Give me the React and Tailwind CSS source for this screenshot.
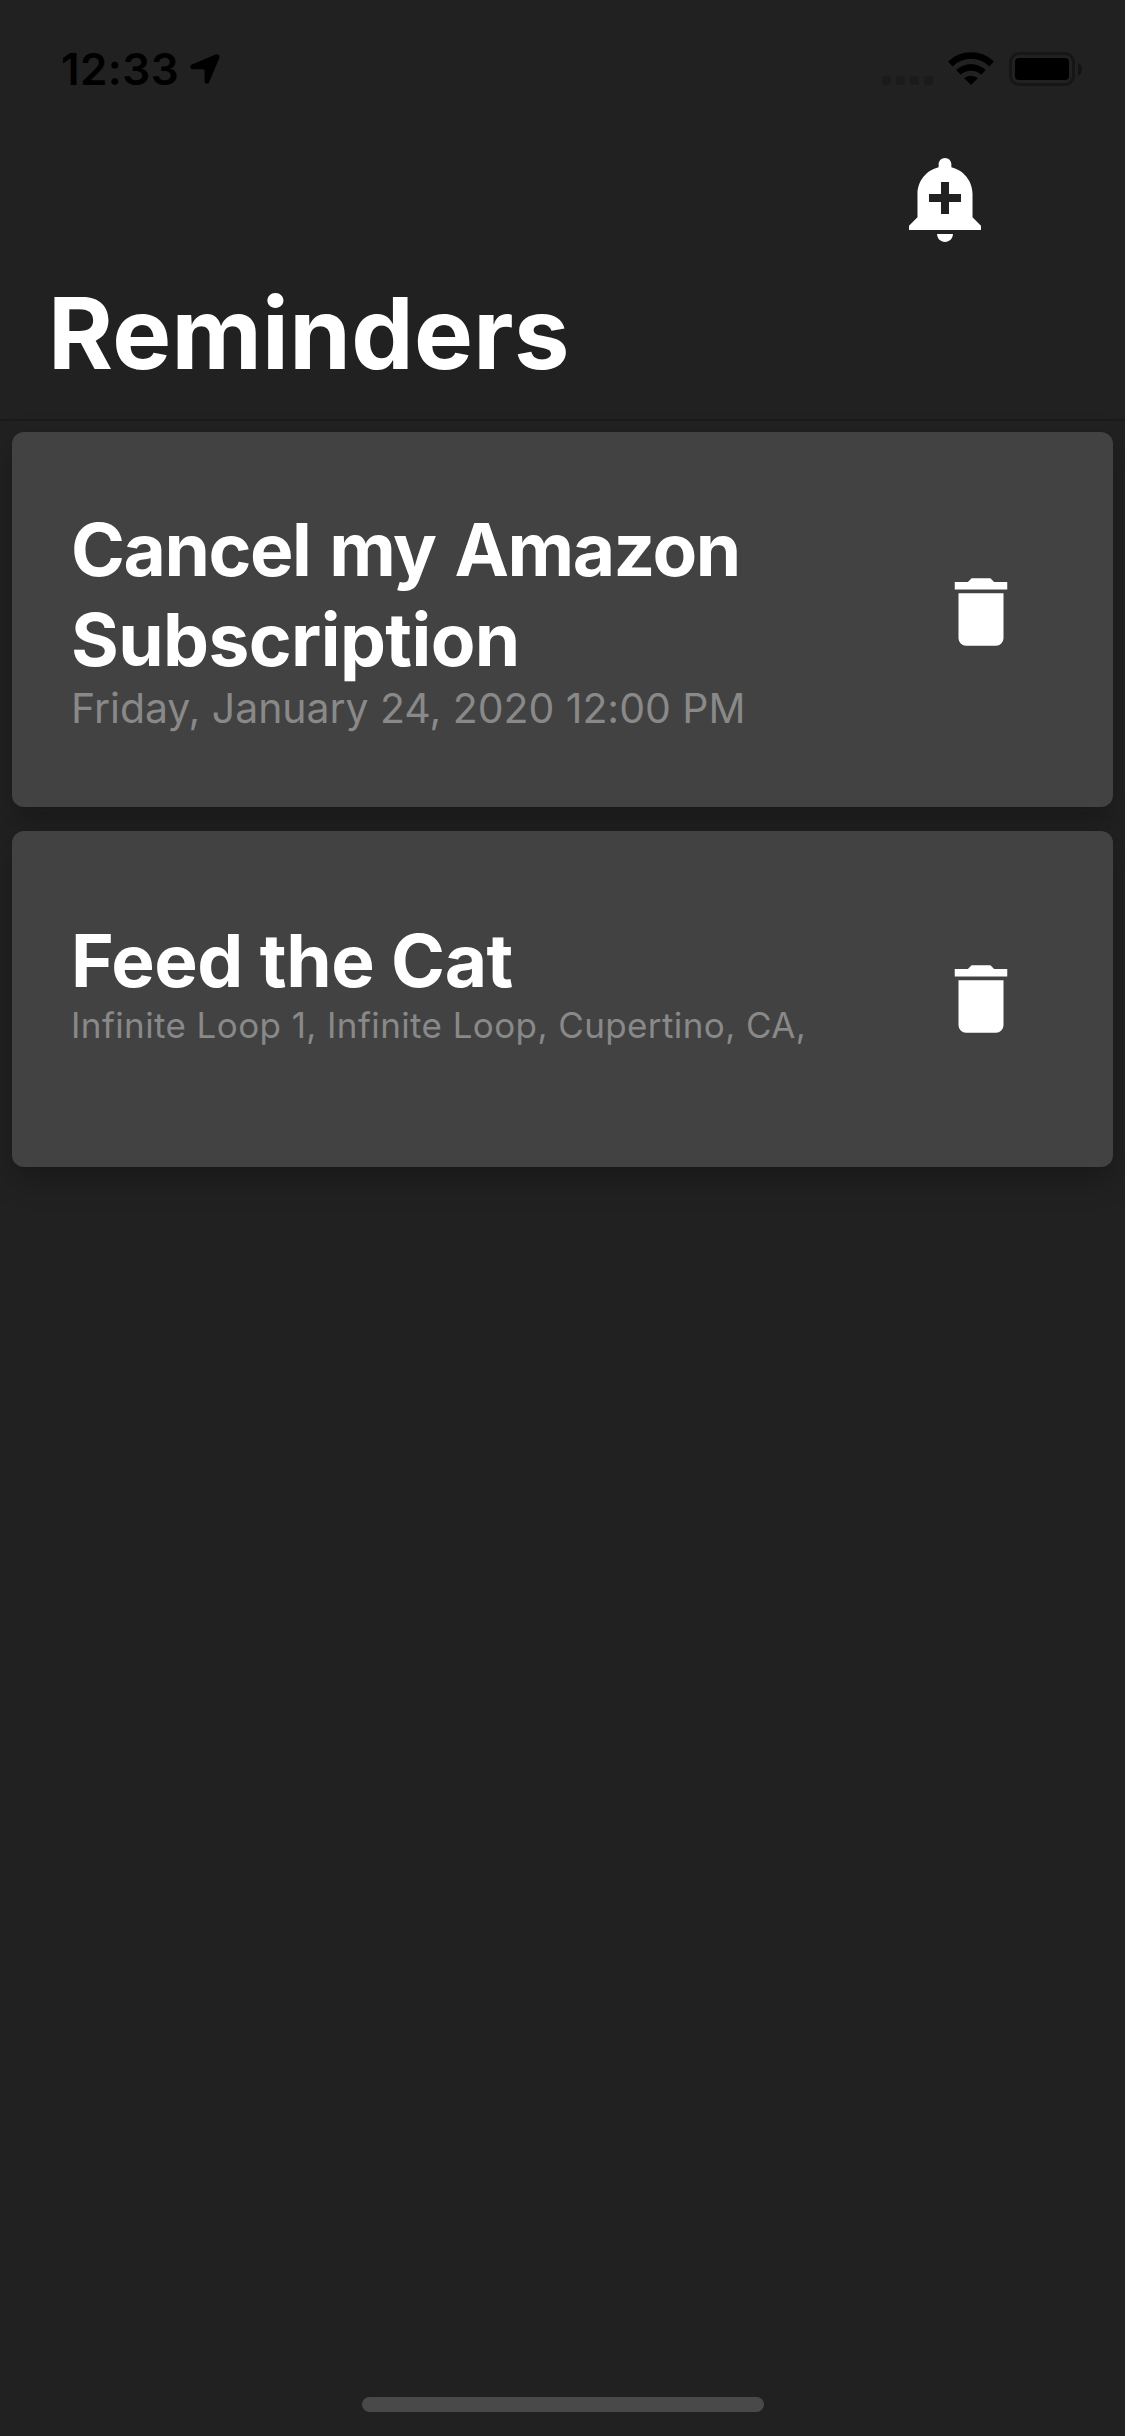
function LocationArrow() {
  return (
    <svg className="mt-[54px] ml-[11px] h-[30px] w-[30px]" viewBox="0 0 30 30">
      <path
        d="M25.6 .5 2 10.6C-.6 11.8-.1 15.2 2.600 15.2H12.700Q14.600 15.200 14.600 17V27.400C14.600 30 18 30.600 19.200 28L29.200 4.300C30.200 1.600 28.200-.5 25.600 .5Z"
        fill="black"
      />
    </svg>
  );
}

function SignalDots() {
  return (
    <div className="mt-[76px] flex gap-[5px]">
      {[0, 1, 2, 3].map((i) => (
        <span key={i} className="size-[9px] rounded-[3px] bg-[#1b1b1b]" />
      ))}
    </div>
  );
}

function WifiIcon() {
  return (
    <svg className="mt-[52px] ml-[15px] h-[33px] w-[46px]" viewBox="0 0 46 33">
      <path d="M0 9.500A33 33 0 0 1 46 9.500L41.300 14.400A26 26 0 0 0 4.700 14.400Z" />
      <path d="M8.200 18A21.500 21.500 0 0 1 37.800 18L33.200 22.800A14.700 14.700 0 0 0 12.800 22.800Z" />
      <path d="M16.200 26.300A10 10 0 0 1 29.800 26.300L23 33Z" />
    </svg>
  );
}

function BatteryIcon() {
  return (
    <div className="mt-[52px] ml-[15px] flex h-[34px] items-center">
      <div className="h-[34px] w-[66px] rounded-[10px] border-[3px] border-[#161616] p-[3px]">
        <div className="h-full w-full rounded-[4px] bg-black" />
      </div>
      <svg className="ml-[3px] h-[13px] w-[4px]" viewBox="0 0 4 13">
        <path d="M0 0Q4 2.200 4 6.500T0 13Z" fill="#141414" />
      </svg>
    </div>
  );
}

function StatusBar() {
  return (
    <div className="flex h-[132px] items-start justify-between pr-[43px] pl-[61px]">
      <div className="flex items-start">
        <span className="mt-[42px] text-[44px] leading-[54px] font-semibold tracking-[0.4px] text-black">
          12:33
        </span>
        <LocationArrow />
      </div>
      <div className="flex items-start">
        <SignalDots />
        <WifiIcon />
        <BatteryIcon />
      </div>
    </div>
  );
}

function AddAlertIcon() {
  return (
    <svg className="size-24" viewBox="0 0 24 24" fill="white">
      <path d="M10.010 21.010c0 1.100.89 1.990 1.990 1.990s1.990-.89 1.990-1.990h-3.980zm8.870-4.190V11c0-3.250-2.250-5.970-5.290-6.690v-.72C13.590 2.710 12.880 2 12 2s-1.590.71-1.590 1.590v.72C7.370 5.030 5.120 7.750 5.120 11v5.820L3 18.940V20h18v-1.060l-2.120-2.120zM16 13.010h-3v3h-2v-3H8V11h3V8h2v3h3v2.010z" />
    </svg>
  );
}

function TrashIcon() {
  return (
    <svg className="size-[90px]" viewBox="0 0 24 24" fill="white">
      <path d="M19 4h-3.500l-1-1h-5l-1 1H5v2h14zM6 19a2 2 0 0 0 2 2h8a2 2 0 0 0 2-2V7H6z" />
    </svg>
  );
}

function ReminderCard({ className, children, buttonClass }) {
  return (
    <article
      className={`mx-3 flex items-start justify-between rounded-xl bg-[#424242] pr-[87px] pl-[59px] shadow-[0_12px_30px_rgba(0,0,0,0.26)] ${className}`}
    >
      <div className="w-[760px] whitespace-nowrap">{children}</div>
      <button className={buttonClass} aria-label="Delete reminder">
        <TrashIcon />
      </button>
    </article>
  );
}

export default function App() {
  return (
    <main className="flex h-[2436px] w-[1125px] flex-col overflow-hidden bg-[#212121] font-['Inter',sans-serif]">
      <StatusBar />
      <header className="h-[289px] border-b-[2px] border-[#1b1b1b]">
        <div className="flex justify-end pt-[18px] pr-[132px]">
          <button aria-label="Add reminder">
            <AddAlertIcon />
          </button>
        </div>
        <h1 className="mt-[27px] pl-12 text-[99px] leading-[120px] font-bold tracking-[0.33px] text-white">
          Reminders
        </h1>
      </header>

      <section className="flex flex-col gap-6 pt-[11px]">
        <ReminderCard className="h-[375px] pt-[73px]" buttonClass="mt-[62px]">
          <h2 className="text-[73px] leading-[90px] font-bold text-white">
            <span className="block tracking-[-1.450px] [word-spacing:3px]">Cancel my Amazon</span>
            <span className="block tracking-[-0.600px]">Subscription</span>
          </h2>
          <p className="-mt-[2px] text-[41px] leading-[50px] tracking-[-0.040px] text-[#898989]">
            Friday, January 24, 2020 12:00 PM
          </p>
        </ReminderCard>
        <ReminderCard className="h-[336px] pt-[85px]" buttonClass="mt-[38px]">
          <h2 className="text-[73px] leading-[90px] font-bold tracking-[-0.450px] text-white">
            Feed the Cat
          </h2>
          <p className="-mt-[2px] text-[35px] leading-[42px] tracking-[0.400px] text-[#898989]">
            Infinite Loop 1, Infinite Loop, Cupertino, CA,
          </p>
        </ReminderCard>
      </section>

      <div className="mt-auto mb-6 h-[15px] w-[402px] self-center rounded-full bg-[#494949]" />
    </main>
  );
}
